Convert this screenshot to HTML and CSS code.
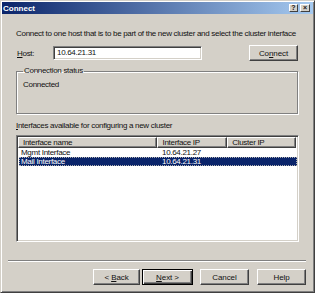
FILE: index.html
```html
<!DOCTYPE html>
<html lang="en">
<head>
	<meta charset="UTF-8">
	<title>Connect</title>
	<link rel="stylesheet" href="styles.css">
</head>
<body>
	<div class="window">
		<div class="titlebar">
			<span class="title">Connect</span>
			<div class="capbtns">
				<span class="capbtn">?</span>
				<span class="capbtn close">&#215;</span>
			</div>
		</div>
		<div class="content">
			<p class="intro">Connect to one host that is to be part of the new cluster and select the cluster interface</p>
			<div class="hostrow">
				<label class="hostlabel"><u>H</u>ost:</label>
				<div class="input">10.64.21.31</div>
				<button class="btn connect">Co<u>n</u>nect</button>
			</div>
			<fieldset class="group">
				<legend>Connection status</legend>
				<div class="status">Connected</div>
			</fieldset>
			<p class="listlabel"><u>I</u>nterfaces available for configuring a new cluster</p>
			<div class="listview">
				<div class="lvhead">
					<span class="col c1">Interface name</span>
					<span class="col c2">Interface IP</span>
					<span class="col c3">Cluster IP</span>
				</div>
				<div class="lvrow">
					<span class="cell c1">Mgmt Interface</span>
					<span class="cell c2">10.64.21.27</span>
					<span class="cell c3"></span>
				</div>
				<div class="lvrow sel">
					<span class="cell c1">Mail Interface</span>
					<span class="cell c2">10.64.21.31</span>
					<span class="cell c3"></span>
				</div>
			</div>
			<div class="sep"></div>
			<div class="btnrow">
				<button class="btn back">&lt; <u>B</u>ack</button>
				<button class="btn next"><u>N</u>ext &gt;</button>
				<button class="btn wide">Cancel</button>
				<button class="btn wide">Help</button>
			</div>
		</div>
	</div>
</body>
</html>
```

FILE: styles.css
```css
*{
	margin: 0;
	padding: 0;
	box-sizing: border-box;
}
body{
	width: 315px;
	height: 293px;
	overflow: hidden;
	font-family: "Liberation Sans", Arial, sans-serif;
	font-size: 8px;
	letter-spacing: -0.3px;
	color: #111;
	background: #d4d0c8;
}
.window{
	width: 315px;
	height: 293px;
	background: #d4d0c8;
	border: 1px solid;
	border-color: #d4d0c8 #404040 #404040 #d4d0c8;
	box-shadow: inset 1px 1px 0 #fff, inset -1px -1px 0 #808080;
	padding: 1px;
	display: flex;
	flex-direction: column;
}
.titlebar{
	height: 12px;
	background: linear-gradient(to right, #0a246a, #a6caf0);
	display: flex;
	align-items: center;
	justify-content: space-between;
	padding: 0 3px 0 1px;
}
.title{
	color: #fff;
	font-weight: bold;
	font-size: 8px;
	letter-spacing: 0;
}
.capbtns{
	display: flex;
	gap: 2px;
}
.capbtn{
	width: 9px;
	height: 8px;
	background: #d4d0c8;
	border: 1px solid;
	border-color: #fff #404040 #404040 #fff;
	font-size: 7px;
	font-weight: bold;
	line-height: 6px;
	text-align: center;
	letter-spacing: 0;
}
.close{
	width: 10px;
}
.content{
	padding: 0 14px;
	display: flex;
	flex-direction: column;
}
.intro{
	margin-top: 15px;
	line-height: 10px;
	white-space: nowrap;
}
.hostrow{
	margin-top: 6px;
	display: flex;
	align-items: center;
	height: 16px;
}
.hostlabel{
	width: 37px;
	padding-left: 1px;
}
.input{
	width: 149px;
	height: 14px;
	background: #fff;
	border: 1px solid;
	border-color: #808080 #fff #fff #808080;
	box-shadow: inset 1px 1px 0 #404040, inset -1px -1px 0 #d4d0c8;
	padding: 0 3px;
	line-height: 12px;
}
.btn{
	font-family: "Liberation Sans", Arial, sans-serif;
	font-size: 8px;
	letter-spacing: -0.1px;
	color: #111;
	background: #d4d0c8;
	border: 1px solid;
	border-color: #fff #404040 #404040 #fff;
	box-shadow: inset -1px -1px 0 #808080;
	height: 16px;
	line-height: 13px;
}
.connect{
	width: 49px;
	margin-left: auto;
	margin-right: 1px;
}
.group{
	margin-top: 5px;
	height: 48px;
	border: 1px solid #808080;
	box-shadow: 1px 1px 0 #fff, inset 1px 1px 0 #fff;
	padding: 0 6px;
	width: 282px;
}
.group legend{
	padding: 0 1px;
	line-height: 10px;
}
.status{
	margin-top: 4px;
	line-height: 10px;
}
.listlabel{
	margin-top: 7px;
	line-height: 10px;
}
.listview{
	margin-top: 4px;
	width: 283px;
	height: 107px;
	background: #fff;
	border: 1px solid;
	border-color: #808080 #fff #fff #808080;
	box-shadow: inset 1px 1px 0 #404040, inset -1px -1px 0 #d4d0c8;
	padding: 1px 2px 1px 1px;
}
.lvhead{
	display: flex;
	height: 11px;
}
.col{
	background: #d4d0c8;
	border: 1px solid;
	border-color: #fff #404040 #404040 #fff;
	box-shadow: inset -1px -1px 0 #808080;
	padding: 0 4px;
	line-height: 9px;
}
.c1{
	width: 140px;
}
.c2{
	width: 70px;
}
.c3{
	width: 69px;
}
.lvrow{
	display: flex;
	height: 9px;
	line-height: 9px;
	margin-left: 1px;
	width: 278px;
}
.cell{
	padding: 0 2px;
}
.cell.c1{
	width: 139px;
}
.cell.c2{
	padding-left: 4px;
}
.sel{
	background: #0a246a;
	color: #fff;
	outline: 1px dotted #b0b0b0;
	outline-offset: -1px;
}
.sep{
	margin-top: 18px;
	height: 2px;
	border-top: 1px solid #808080;
	border-bottom: 1px solid #fff;
	width: 298px;
	margin-left: -8px;
}
.btnrow{
	margin-top: 7px;
	display: flex;
	justify-content: flex-end;
	margin-right: -7px;
}
.back{
	width: 47px;
}
.next{
	width: 51px;
	margin-left: 2px;
	border: 1px solid #000;
	box-shadow: inset 1px 1px 0 #fff, inset -1px -1px 0 #404040, inset -2px -2px 0 #808080;
}
.wide{
	width: 49px;
	margin-left: 7px;
}
.wide + .wide{
	margin-left: 8px;
}
```
